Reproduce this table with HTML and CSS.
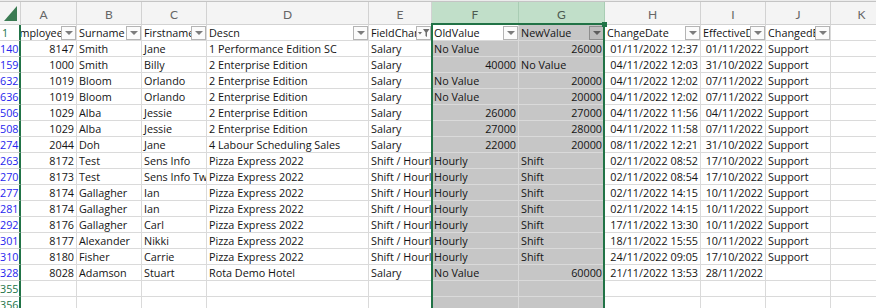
FILE: index.html
```html
<!DOCTYPE html>
<html>
<head>
<meta charset="utf-8">
<link rel="stylesheet" href="styles.css">
</head>
<body>
<div class="chrome"></div>
<div class="wrap">
  <div class="sheet">
    <div class="c h corner"><svg class="tri" width="14" height="16" viewBox="0 0 14 16"><polygon points="13,0 13,15 0,15" fill="#3b7b53"/></svg></div>
    <div class="c h ha">A</div>
    <div class="c h">B</div>
    <div class="c h">C</div>
    <div class="c h">D</div>
    <div class="c h">E</div>
    <div class="c h hs">F</div>
    <div class="c h hs">G</div>
    <div class="c h">H</div>
    <div class="c h">I</div>
    <div class="c h">J</div>
    <div class="c h">K</div>

    <div class="c rh s r1">1</div>
    <div class="c fh a1"><span>EmployeeID</span><i class="fb"></i></div>
    <div class="c fh">Surname<i class="fb"></i></div>
    <div class="c fh">Firstname<i class="fb"></i></div>
    <div class="c fh">Descn<i class="fb"></i></div>
    <div class="c fh">FieldChange<i class="fb fa"><svg width="13" height="12" viewBox="0 0 13 12"><polygon points="1,5 5,5 3,7.5" fill="#6d6d6d"/><polygon points="6,2 12.5,2 10,5.5 10,10 8.5,9 8.5,5.5" fill="#6d6d6d"/></svg></i></div>
    <div class="c fh">OldValue<i class="fb"></i></div>
    <div class="c fh sel">NewValue<i class="fb fs"></i></div>
    <div class="c fh">ChangeDate<i class="fb"></i></div>
    <div class="c fh">EffectiveDate<i class="fb"></i></div>
    <div class="c fh">ChangedBy<i class="fb"></i></div>
    <div class="c"></div>

    <div class="c rh f">140</div><div class="c n">8147</div><div class="c">Smith</div><div class="c">Jane</div><div class="c">1 Performance Edition SC</div><div class="c">Salary</div><div class="c sel">No Value</div><div class="c sel n">26000</div><div class="c n">01/11/2022 12:37</div><div class="c n">01/11/2022</div><div class="c">Support</div><div class="c"></div>
    <div class="c rh f">159</div><div class="c n">1000</div><div class="c">Smith</div><div class="c">Billy</div><div class="c">2 Enterprise Edition</div><div class="c">Salary</div><div class="c sel n">40000</div><div class="c sel">No Value</div><div class="c n">04/11/2022 12:03</div><div class="c n">31/10/2022</div><div class="c">Support</div><div class="c"></div>
    <div class="c rh f">632</div><div class="c n">1019</div><div class="c">Bloom</div><div class="c">Orlando</div><div class="c">2 Enterprise Edition</div><div class="c">Salary</div><div class="c sel">No Value</div><div class="c sel n">20000</div><div class="c n">04/11/2022 12:02</div><div class="c n">07/11/2022</div><div class="c">Support</div><div class="c"></div>
    <div class="c rh f">636</div><div class="c n">1019</div><div class="c">Bloom</div><div class="c">Orlando</div><div class="c">2 Enterprise Edition</div><div class="c">Salary</div><div class="c sel">No Value</div><div class="c sel n">20000</div><div class="c n">04/11/2022 12:02</div><div class="c n">07/11/2022</div><div class="c">Support</div><div class="c"></div>
    <div class="c rh f">506</div><div class="c n">1029</div><div class="c">Alba</div><div class="c">Jessie</div><div class="c">2 Enterprise Edition</div><div class="c">Salary</div><div class="c sel n">26000</div><div class="c sel n">27000</div><div class="c n">04/11/2022 11:56</div><div class="c n">04/11/2022</div><div class="c">Support</div><div class="c"></div>
    <div class="c rh f">508</div><div class="c n">1029</div><div class="c">Alba</div><div class="c">Jessie</div><div class="c">2 Enterprise Edition</div><div class="c">Salary</div><div class="c sel n">27000</div><div class="c sel n">28000</div><div class="c n">04/11/2022 11:58</div><div class="c n">07/11/2022</div><div class="c">Support</div><div class="c"></div>
    <div class="c rh f">274</div><div class="c n">2044</div><div class="c">Doh</div><div class="c">Jane</div><div class="c">4 Labour Scheduling Sales</div><div class="c">Salary</div><div class="c sel n">22000</div><div class="c sel n">20000</div><div class="c n">08/11/2022 12:21</div><div class="c n">31/10/2022</div><div class="c">Support</div><div class="c"></div>
    <div class="c rh f">263</div><div class="c n">8172</div><div class="c">Test</div><div class="c">Sens Info</div><div class="c">Pizza Express 2022</div><div class="c">Shift / Hourly</div><div class="c sel">Hourly</div><div class="c sel">Shift</div><div class="c n">02/11/2022 08:52</div><div class="c n">17/10/2022</div><div class="c">Support</div><div class="c"></div>
    <div class="c rh f">270</div><div class="c n">8173</div><div class="c">Test</div><div class="c">Sens Info Two</div><div class="c">Pizza Express 2022</div><div class="c">Shift / Hourly</div><div class="c sel">Hourly</div><div class="c sel">Shift</div><div class="c n">02/11/2022 08:54</div><div class="c n">17/10/2022</div><div class="c">Support</div><div class="c"></div>
    <div class="c rh f">277</div><div class="c n">8174</div><div class="c">Gallagher</div><div class="c">Ian</div><div class="c">Pizza Express 2022</div><div class="c">Shift / Hourly</div><div class="c sel">Hourly</div><div class="c sel">Shift</div><div class="c n">02/11/2022 14:15</div><div class="c n">10/11/2022</div><div class="c">Support</div><div class="c"></div>
    <div class="c rh f">281</div><div class="c n">8174</div><div class="c">Gallagher</div><div class="c">Ian</div><div class="c">Pizza Express 2022</div><div class="c">Shift / Hourly</div><div class="c sel">Hourly</div><div class="c sel">Shift</div><div class="c n">02/11/2022 14:15</div><div class="c n">10/11/2022</div><div class="c">Support</div><div class="c"></div>
    <div class="c rh f">292</div><div class="c n">8176</div><div class="c">Gallagher</div><div class="c">Carl</div><div class="c">Pizza Express 2022</div><div class="c">Shift / Hourly</div><div class="c sel">Hourly</div><div class="c sel">Shift</div><div class="c n">17/11/2022 13:30</div><div class="c n">10/11/2022</div><div class="c">Support</div><div class="c"></div>
    <div class="c rh f">301</div><div class="c n">8177</div><div class="c">Alexander</div><div class="c">Nikki</div><div class="c">Pizza Express 2022</div><div class="c">Shift / Hourly</div><div class="c sel">Hourly</div><div class="c sel">Shift</div><div class="c n">18/11/2022 15:55</div><div class="c n">10/11/2022</div><div class="c">Support</div><div class="c"></div>
    <div class="c rh f">310</div><div class="c n">8180</div><div class="c">Fisher</div><div class="c">Carrie</div><div class="c">Pizza Express 2022</div><div class="c">Shift / Hourly</div><div class="c sel">Hourly</div><div class="c sel">Shift</div><div class="c n">24/11/2022 09:05</div><div class="c n">17/10/2022</div><div class="c">Support</div><div class="c"></div>
    <div class="c rh f">328</div><div class="c n">8028</div><div class="c">Adamson</div><div class="c">Stuart</div><div class="c">Rota Demo Hotel</div><div class="c">Salary</div><div class="c sel">No Value</div><div class="c sel n">60000</div><div class="c n">21/11/2022 13:53</div><div class="c n">28/11/2022</div><div class="c"></div><div class="c"></div>
    <div class="c rh s">355</div><div class="c"></div><div class="c"></div><div class="c"></div><div class="c"></div><div class="c"></div><div class="c sel"></div><div class="c sel"></div><div class="c"></div><div class="c"></div><div class="c"></div><div class="c"></div>
    <div class="c rh s">356</div><div class="c"></div><div class="c"></div><div class="c"></div><div class="c"></div><div class="c"></div><div class="c sel"></div><div class="c sel"></div><div class="c"></div><div class="c"></div><div class="c"></div><div class="c"></div>
  </div>
  <div class="selbox"></div>
  <div class="handle"></div>
</div>
</body>
</html>
```

FILE: styles.css
```css
* { box-sizing: border-box; margin: 0; padding: 0; }
html, body { width: 876px; height: 308px; overflow: hidden; background: #fff; }
body {
  font-family: "Open Sans", "Noto Sans", sans-serif;
  font-size: 10.8px;
  color: #141414;
}
.chrome { height: 1px; background: #ececec; }
.wrap { position: relative; }
.sheet {
  display: grid;
  grid-template-columns: 21px 56px 65px 65px 162px 63px 87px 86px 96px 65px 65px 62px;
  grid-template-rows: 23px;
  grid-auto-rows: 16px;
  border-top: 1px solid #c4c4c4;
  width: max-content;
}
.c {
  position: relative;
  border-right: 1px solid #dadada;
  border-bottom: 1px solid #dadada;
  overflow: hidden;
  white-space: nowrap;
  line-height: 15px;
  padding: 0 2px;
}
.n { text-align: right; }
.h {
  background: #f4f4f4;
  border-color: #d2d2d2;
  color: #666;
  font-family: Lato, "Open Sans", sans-serif;
  font-size: 12px;
  text-align: center;
  padding-top: 5px;
}
.ha { padding-right: 12px; }
.hs { background: #c1dfc9; border-right-color: #a9cdb4; color: #4d5a50; }
.corner { padding: 0; }
.tri { position: absolute; left: 4px; top: 4px; }
.rh {
  border-right: 2px solid #217346;
  border-bottom-color: #d6d6d6;
  padding: 0 2px 0 0;
  text-align: right;
  background: #fff;
  z-index: 1;
}
.r1 { text-align: left; padding-left: 2px; }
.f { color: #2626ee; }
.s { color: #217346; }
.sel { background: #c6c6c6; }
.fh { padding-right: 2px; }
.a1 { padding: 0 10px 0 0; display: flex; justify-content: center; }
.a1 span { flex: none; }
.fb {
  position: absolute;
  right: 0;
  bottom: 0;
  width: 15px;
  height: 14px;
  border: 1px solid #b4b4b4;
  background: #fbfbfb;
  display: flex;
  align-items: center;
  justify-content: center;
}
.fb::after {
  content: "";
  border-left: 4px solid transparent;
  border-right: 4px solid transparent;
  border-top: 4px solid #7c7c7c;
}
.fa::after { display: none; }
.fs { background: #bdbdbd; border-color: #8e8e8e; }
.fs::after { border-top-color: #5e5e5e; }
.selbox {
  position: absolute;
  left: 431px;
  top: 22px;
  width: 174px;
  height: 300px;
  border: 2px solid #217346;
  pointer-events: none;
}
.handle {
  position: absolute;
  left: 602px;
  top: 21px;
  width: 5px;
  height: 5px;
  background: #217346;
}
```
